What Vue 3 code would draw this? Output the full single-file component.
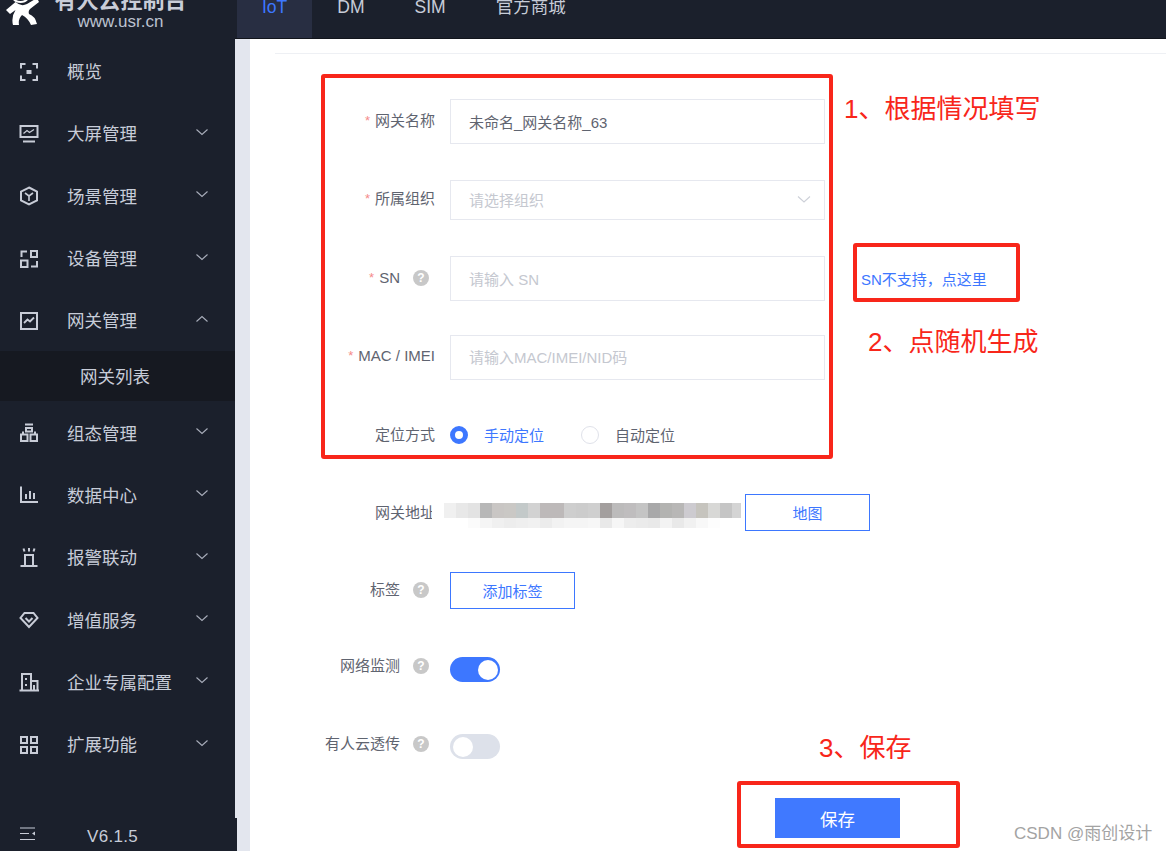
<template>
  <div class="page">
    <aside class="sidebar">
      <div class="brand">
        <svg class="logo" width="44" height="28" viewBox="0 0 44 28" fill="none">
          <path d="M13 -2a8 6 0 0 0 15 0" stroke="#fff" stroke-width="2"/>
          <path d="M6 10L15.500 2Q21 7 27 4L37 -2L39 2L30 9Q28 11 29 14Q35 16 37 24L31 25Q28 18 22 15Q18 19 19 25L13 25Q11 17 15.500 10L10 14Z" fill="#fff"/>
        </svg>
        <div class="brand-text">
          <div class="brand-name">有人云控制台</div>
          <div class="brand-url">www.usr.cn</div>
        </div>
      </div>

      <nav class="menu">
        <template v-for="item in menu" :key="item.title">
          <div class="menu-item">
            <svg class="menu-icon" width="20" height="20" viewBox="0 0 20 20" fill="none" stroke="#c8ccd7" stroke-width="2" v-html="item.icon"></svg>
            <span class="menu-title">{{ item.title }}</span>
            <svg v-if="item.arrow" class="chevron" :class="{ up: item.open }" width="14" height="8" viewBox="0 0 14 8" fill="none">
              <path d="M1.500 1.500L7 6.500L12.500 1.500" stroke="#a9aebb" stroke-width="1.100"/>
            </svg>
          </div>
          <div v-if="item.open" class="submenu">网关列表</div>
        </template>
      </nav>

      <div class="side-foot">
        <svg width="18" height="14" viewBox="0 0 18 14" fill="none" stroke="#c8ccd7" stroke-width="1.200">
          <path d="M1 1H16M1 6.500H10M1 12.500H16"/>
          <path d="M16 4.500V8.500L13 6.500Z" fill="#c8ccd7" stroke="none"/>
        </svg>
        <span class="version">V6.1.5</span>
      </div>
    </aside>

    <div class="content">
      <header class="topbar">
        <div v-for="(tab, i) in tabs" :key="tab" class="tab" :class="{ active: i === 0 }">{{ tab }}</div>
      </header>

      <div class="body">
        <div class="strip"></div>
        <main class="main">
          <div class="divider"></div>
          <div class="form">
            <div class="row row-name">
              <label class="label"><i>*</i>网关名称</label>
              <div class="input value">未命名_网关名称_63</div>
            </div>
            <div class="row row-org">
              <label class="label"><i>*</i>所属组织</label>
              <div class="input select">
                <span class="hint">请选择组织</span>
                <svg width="16" height="9" viewBox="0 0 16 9" fill="none">
                  <path d="M2 1.500L8 7L14 1.500" stroke="#cdd0d8" stroke-width="1.100"/>
                </svg>
              </div>
            </div>
            <div class="row row-sn">
              <label class="label"><i>*</i>SN<span class="help">?</span></label>
              <div class="input hint">请输入 SN</div>
              <a class="sn-link">SN不支持，点这里</a>
            </div>
            <div class="row row-mac">
              <label class="label"><i>*</i>MAC / IMEI</label>
              <div class="input hint">请输入MAC/IMEI/NID码</div>
            </div>
            <div class="row row-pos">
              <label class="label">定位方式</label>
              <div class="radios">
                <span class="radio on"></span>
                <span class="radio-text blue">手动定位</span>
                <span class="radio"></span>
                <span class="radio-text">自动定位</span>
              </div>
            </div>
            <div class="row row-addr">
              <label class="label">网关地址</label>
              <div class="blur">
                <span v-for="(c, i) in blurCells" :key="i" :style="{ background: c }"></span>
              </div>
              <button class="btn-line map">地图</button>
            </div>
            <div class="row row-tag">
              <label class="label">标签<span class="help">?</span></label>
              <button class="btn-line">添加标签</button>
            </div>
            <div class="row row-net">
              <label class="label">网络监测<span class="help">?</span></label>
              <div class="switch on"><span></span></div>
            </div>
            <div class="row row-trans">
              <label class="label">有人云透传<span class="help">?</span></label>
              <div class="switch"><span></span></div>
            </div>
            <button class="save">保存</button>
          </div>
        </main>
      </div>
    </div>

    <!-- 截图上的红色标注 -->
    <div class="mark mark-form"></div>
    <div class="mark mark-sn"></div>
    <div class="mark mark-save"></div>
    <div class="note note-1">1、根据情况填写</div>
    <div class="note note-2">2、点随机生成</div>
    <div class="note note-3">3、保存</div>
    <div class="watermark">CSDN @雨创设计</div>
  </div>
</template>

<script setup>
const tabs = ['IoT', 'DM', 'SIM', '官方商城']

const menu = [
  { title: '概览', icon: '<path d="M6.500 2H2V6.500M13.500 2H18V6.500M6.500 18H2V13.500M13.500 18H18V13.500"/><rect x="7.500" y="8" width="5" height="4" fill="#c8ccd7" stroke="none"/>' },
  { title: '大屏管理', arrow: true, icon: '<rect x="1.500" y="2" width="17" height="11" /><path d="M4.500 9.500L8 6.500L10.500 8.500L15 5.500" stroke-width="1.300"/><path d="M4 17.500H16"/>' },
  { title: '场景管理', arrow: true, icon: '<path d="M10 1.500L18 5.500V14.500L10 18.500L2 14.500V5.500Z"/><path d="M6 7L10 10L14 7M10 10V15" stroke-width="1.600"/>' },
  { title: '设备管理', arrow: true, icon: '<path d="M8 2.500H2.500V8M2 11.500H8.500V18H2ZM12 2H18V8H12ZM18 12V17.500H12"/>' },
  { title: '网关管理', arrow: true, open: true, icon: '<rect x="2" y="2" width="16" height="16"/><path d="M5 12L8.500 8.500L11 10.500L15 6.500" stroke-width="1.800"/>' },
  { title: '组态管理', arrow: true, icon: '<path d="M6 1.500H14M7 5H13V8.500H7ZM4 8.500V11M16 8.500V11M2 11.500H8.500V18H2ZM11.500 11.500H18V18H11.500Z"/>' },
  { title: '数据中心', arrow: true, icon: '<path d="M2 1.500V17H19M7 9V14M11 6V14M15 8V14"/>' },
  { title: '报警联动', arrow: true, icon: '<path d="M5 7H15M6 7V17M14 7V17M1.500 18H18.500M10 0V3.500M4.500 .5L5.500 3.500M15.500 .5L14.500 3.500"/>' },
  { title: '增值服务', arrow: true, icon: '<path d="M5.500 3H14.500L18.500 8L10 17L1.500 8Z"/><path d="M6.500 8L10 11.500L13.500 8"/>' },
  { title: '企业专属配置', arrow: true, icon: '<path d="M3 18V2H12V18M12 9H18.500V18M.500 18.500H20M7 6V8M7 12V14" /><path d="M15 13V18"/>' },
  { title: '扩展功能', arrow: true, icon: '<rect x="2" y="2" width="6" height="6"/><rect x="12" y="2" width="6" height="6"/><rect x="2" y="12" width="6" height="6"/><rect x="12" y="12" width="6" height="6"/>' }
]

// 打码区域的马赛克色块
const topRow = ['#fff', '#f0f0f0', '#e8e8e8', '#e3e3e3', '#b7b7b7', '#c9c6c4', '#cac8c5', '#c3c9c9', '#d2d2d2', '#bdb9b9', '#bdb9b9', '#cecece', '#cccccc', '#cfcfcf', '#a39f9e', '#bcbbbb', '#bfbdbe', '#c4c4c4', '#a8a8a9', '#b3b3b1', '#b8b7b6', '#cdcbd0', '#c6c4be', '#d8d8d6', '#c5c5c5', '#d4d4d4']
const bottomRow = ['#fff', '#fff', '#fff', '#fbfbfb', '#f5f5f5', '#f0f0f0', '#ededed', '#efefef', '#f1f1f1', '#ececec', '#f2f2f2', '#f5f5f5', '#f5f5f5', '#f7f7f7', '#e9e9e9', '#f6f6f6', '#ededed', '#ebebeb', '#e9e9e9', '#f3f3f3', '#e9e9e9', '#f1f1f1', '#f8f8f8', '#fdfdfd', '#fff', '#fff']
const blurCells = [...topRow, ...bottomRow]
</script>

<style scoped>
.page {
  position: relative;
  display: flex;
  width: 1166px;
  height: 851px;
  overflow: hidden;
  background: #fff;
  font-family: "Liberation Sans", "Noto Sans CJK SC", sans-serif;
  color: #5f6470;
}

.sidebar {
  display: flex;
  flex-direction: column;
  flex: none;
  width: 235px;
  background: #1b202c;
  z-index: 2;
}

.brand {
  display: flex;
  height: 39.5px;
  overflow: hidden;
  flex: none;
}

.logo {
  flex: none;
}

.brand-text {
  margin-left: 10px;
  width: 133px;
  text-align: center;
}

.brand-name {
  margin-top: -12px;
  font-size: 22px;
  line-height: 26px;
  font-weight: 700;
  color: #c9cdd8;
  white-space: nowrap;
}

.brand-url {
  margin-top: -1px;
  font-size: 17px;
  line-height: 18px;
  color: #bcc2d0;
}

.menu {
  flex: 1;
}

.menu-item {
  display: flex;
  align-items: center;
  height: 62.3px;
  padding-left: 19px;
  font-size: 17.500px;
  color: #c7ccd8;
  white-space: nowrap;
}

.menu-icon {
  flex: none;
  margin-top: 2px;
}

.menu-title {
  margin-left: 28px;
  flex: 1;
}

.chevron {
  flex: none;
  margin: -2px 26px 0 0;
}

.chevron.up {
  transform: rotate(180deg);
}

.submenu {
  height: 50px;
  padding-left: 80px;
  line-height: 52px;
  font-size: 17.500px;
  color: #c7ccd8;
  background: #161921;
}

.side-foot {
  display: flex;
  align-items: center;
  flex: none;
  width: 237px;
  height: 33px;
  padding: 0 0 1px 19px;
  box-sizing: border-box;
  background: #1b202c;
}

.version {
  margin: 5px 0 0 50px;
  font-size: 17px;
  letter-spacing: .3px;
  color: #c7ccd8;
}

.content {
  display: flex;
  flex-direction: column;
  flex: 1;
  min-width: 0;
}

.topbar {
  display: flex;
  flex: none;
  height: 39px;
  padding-left: 2px;
  box-sizing: border-box;
  background: #1b202c;
  border-bottom: 1px solid #12151c;
}

.tab {
  height: 38px;
  padding: 0 25px;
  font-size: 17.500px;
  line-height: 14px;
  color: #c7ccd8;
  white-space: nowrap;
}

.tab.active {
  color: #3d77ff;
  background: #282e42;
}

.body {
  display: flex;
  flex: 1;
  min-height: 0;
}

.strip {
  flex: none;
  width: 15px;
  background: #e3e6ee;
}

.main {
  flex: 1;
  padding-top: 14px;
}

.divider {
  height: 1px;
  margin-left: 25px;
  background: #eef0f4;
}

.form {
  padding-top: 45px;
}

.row {
  display: flex;
  align-items: center;
}

.label {
  display: flex;
  align-items: center;
  justify-content: flex-end;
  flex: none;
  width: 185px;
  margin-right: 15px;
  font-size: 15px;
  line-height: 20px;
  color: #5f6470;
  white-space: nowrap;
}

.label i {
  margin: 0 5px 0 0;
  font-style: normal;
  font-size: 13px;
  color: #f58a8a;
}

.help {
  display: flex;
  align-items: center;
  justify-content: center;
  width: 16px;
  height: 16px;
  margin: 0 6px 0 13px;
  border-radius: 50%;
  background: #c8c8c8;
  color: #fff;
  font-size: 12px;
  font-weight: 700;
}

.input {
  display: flex;
  align-items: center;
  justify-content: space-between;
  flex: none;
  width: 375px;
  height: 45px;
  padding: 0 12px 0 18px;
  box-sizing: border-box;
  border: 1px solid #e6e8ef;
  font-size: 15px;
}

.value {
  color: #5f6470;
}

.hint {
  color: #c5c8d0;
}

.row-name .label {
  margin-top: -2px;
}

.row-org {
  margin-top: 36px;
}

.row-org .input {
  height: 40px;
  padding-bottom: 2px;
}

.row-org .label {
  margin-top: -2px;
}

.row-sn {
  margin-top: 36px;
}

.row-sn .label {
  margin-top: -2px;
}

.sn-link {
  margin-left: 36px;
  font-size: 15px;
  color: #3d77ff;
  white-space: nowrap;
}

.row-mac {
  margin-top: 34px;
}

.row-mac .input {
  padding-bottom: 2px;
}

.row-mac .label {
  margin-top: -4px;
}

.row-pos {
  margin-top: 43px;
  height: 24px;
}

.radios {
  display: flex;
  align-items: center;
  font-size: 15px;
}

.radio {
  display: block;
  box-sizing: border-box;
  width: 18px;
  height: 18px;
  border: 1px solid #e0e2ea;
  border-radius: 50%;
}

.radio.on {
  border: 5.500px solid #3d77ff;
  background: #fff;
}

.radio-text {
  margin: -1px 0 0 16px;
  width: 97px;
}

.radio-text.blue {
  color: #3d77ff;
}

.row-addr {
  position: relative;
  margin-top: 47px;
}

.blur {
  position: absolute;
  left: 182px;
  top: 9px;
  display: grid;
  width: 309px;
  overflow: hidden;
  grid-template-columns: repeat(26, 12px);
  grid-template-rows: 15px 10px;
}

.map {
  margin-left: 295px;
}

.btn-line {
  flex: none;
  width: 125px;
  height: 37px;
  padding: 0;
  background: #fff;
  border: 1px solid #3d77ff;
  border-radius: 0;
  font-family: inherit;
  font-size: 15px;
  color: #3d77ff;
}

.row-tag {
  margin-top: 41px;
}

.row-tag .label {
  margin-top: -2px;
}

.row-net {
  margin-top: 48px;
}

.row-net .label {
  margin-top: -7px;
}

.row-trans {
  margin-top: 52px;
}

.row-trans .label {
  margin-top: -5px;
}

.switch {
  flex: none;
  width: 50px;
  height: 25px;
  padding: 2.500px;
  box-sizing: border-box;
  border-radius: 13px;
  background: #dde1ea;
}

.switch span {
  display: block;
  width: 20px;
  height: 20px;
  border-radius: 50%;
  background: #fff;
}

.switch.on {
  background: #3d77ff;
}

.switch.on span {
  margin-left: 25px;
}

.save {
  display: block;
  width: 125px;
  height: 40px;
  margin: 39px 0 0 525px;
  padding: 0;
  border: none;
  background: #4079ff;
  font-family: inherit;
  font-size: 17.500px;
  color: #fff;
}

.mark {
  position: absolute;
  box-sizing: border-box;
  border: 4px solid #f8261a;
  border-radius: 3px;
  z-index: 3;
}

.mark-form {
  left: 321px;
  top: 74px;
  width: 512px;
  height: 385px;
}

.mark-sn {
  left: 853px;
  top: 243px;
  width: 167px;
  height: 59px;
}

.mark-save {
  left: 737px;
  top: 781px;
  width: 223px;
  height: 67px;
}

.note {
  position: absolute;
  font-size: 26px;
  line-height: 34px;
  color: #f8261a;
  white-space: nowrap;
  z-index: 3;
}

.note-1 {
  left: 844px;
  top: 92px;
}

.note-2 {
  left: 868px;
  top: 325px;
}

.note-3 {
  left: 819px;
  top: 731px;
}

.watermark {
  position: absolute;
  left: 1014px;
  top: 824px;
  font-size: 17px;
  line-height: 20px;
  color: #a3a3a3;
  white-space: nowrap;
  z-index: 3;
}
</style>

<style>
html,
body {
  margin: 0;
  overflow: hidden;
}
</style>
